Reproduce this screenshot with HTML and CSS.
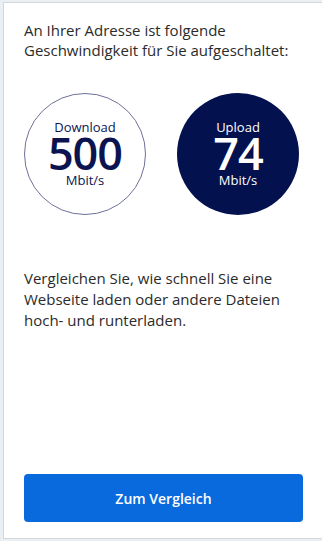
FILE: index.html
```html
<!DOCTYPE html>
<html lang="de">
<head>
    <meta charset="UTF-8">
    <meta name="viewport" content="width=device-width, initial-scale=1.0">
    <title>Geschwindigkeit</title>
    <link rel="stylesheet" href="styles.css">
</head>
<body>
    <div class="card">
        <p class="intro">An Ihrer Adresse ist folgende Geschwindigkeit für Sie aufgeschaltet:</p>

        <div class="speeds">
            <div class="speed speed-down">
                <span class="speed-label">Download</span>
                <span class="speed-value">500</span>
                <span class="speed-unit">Mbit/s</span>
            </div>
            <div class="speed speed-up">
                <span class="speed-label">Upload</span>
                <span class="speed-value">74</span>
                <span class="speed-unit">Mbit/s</span>
            </div>
        </div>

        <p class="hint">Vergleichen Sie, wie schnell Sie eine Webseite laden oder andere Dateien hoch- und runterladen.</p>

        <button class="compare-btn">Zum Vergleich</button>
    </div>
</body>
</html>
```

FILE: styles.css
```css
html, body {
    margin: 0;
    height: 100%;
    overflow: hidden;
}
body {
    background: #e9eff2;
    font-family: "Open Sans", "Noto Sans", sans-serif;
    color: #2b2b2b;
    padding: 2px 0 2px 3px;
    box-sizing: border-box;
}
.card {
    display: flex;
    flex-direction: column;
    height: 100%;
    box-sizing: border-box;
    padding: 17px 19px 16px 20px;
    background: #fff;
    border: 1px solid #d3d7da;
    border-right: 0;
}
.intro,
.hint {
    margin: 0;
    font-size: 15px;
    line-height: 20px;
}
.speeds {
    display: flex;
    gap: 31px;
    margin-top: 33px;
}
.speed {
    width: 122px;
    height: 122px;
    border-radius: 50%;
    box-sizing: border-box;
    display: flex;
    flex-direction: column;
    align-items: center;
    justify-content: center;
}
.speed-down {
    border: 1px solid #6e7199;
    color: #0b1450;
}
.speed-up {
    background: #04114f;
    color: #fff;
}
.speed-label {
    font-size: 13px;
    line-height: 13px;
}
.speed-unit {
    font-size: 13px;
    line-height: 16px;
}
.speed-value {
    font-size: 45px;
    line-height: 38px;
    font-weight: 600;
    letter-spacing: -1px;
}
.hint {
    margin-top: 53px;
    line-height: 21px;
}
.compare-btn {
    margin-top: auto;
    height: 48px;
    border: 0;
    border-radius: 4px;
    background: #096add;
    color: #fff;
    font-family: inherit;
    font-size: 14px;
    font-weight: 600;
}
```
